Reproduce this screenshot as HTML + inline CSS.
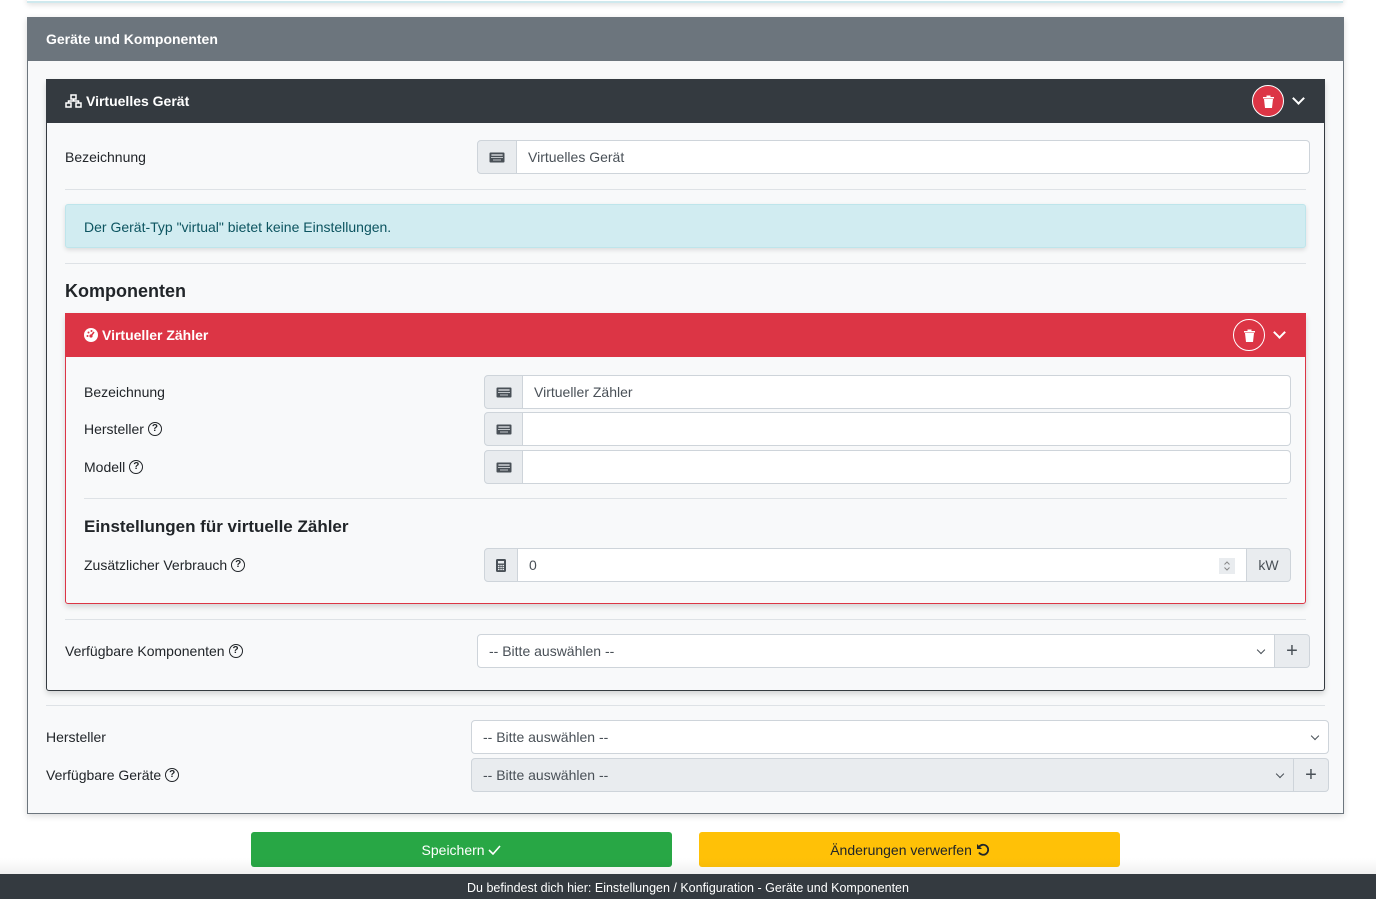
<!DOCTYPE html>
<html><head><meta charset="utf-8"><style>
*{box-sizing:border-box;margin:0;padding:0}
body{width:1376px;height:899px;background:#fff;font-family:"Liberation Sans",Arial,sans-serif;font-size:14px;color:#212529;position:relative;overflow:hidden}
.a{position:absolute}
.lbl{position:absolute;font-size:14px;color:#212529;display:flex;align-items:center}
.ig{position:absolute;display:flex;height:34px}
.ig .ad{background:#e9ecef;border:1px solid #ced4da;display:flex;align-items:center;justify-content:center;color:#495057}
.ig .in{flex:1;background:#fff;border:1px solid #ced4da;border-left:none;padding:0 11px;display:flex;align-items:center;color:#495057;font-size:14px}
.ig .l{border-radius:4px 0 0 4px}
.hr{position:absolute;height:1px;background:#dee2e6}
.q{display:inline-flex;align-items:center;justify-content:center;width:14px;height:14px;border:1.3px solid #212529;border-radius:50%;font-size:10px;font-weight:bold;margin-left:4px;line-height:1}
.chev{position:absolute;width:6px;height:6px;border-right:1.3px solid #495057;border-bottom:1.3px solid #495057;transform:rotate(45deg)}
.plus{font-size:20px;color:#343a40}
</style></head><body>
<div class="a" style="left:27px;top:-10px;width:1316px;height:13px;border-bottom:2px solid #cfe9ee;box-shadow:0 2px 6px rgba(0,0,0,.12)"></div>
<div class="a" style="left:27px;top:17px;width:1317px;height:797px;background:#f8f9fa;border:1px solid #6c757d;box-shadow:0 2px 6px rgba(0,0,0,.15)"></div>
<div class="a" style="left:27px;top:17px;width:1317px;height:44px;background:#6c757d;color:#fff;font-weight:bold;font-size:14px;padding:14px 19px">Geräte und Komponenten</div>
<div class="a" style="left:46px;top:79px;width:1279px;height:612px;border:1px solid #343a40;border-radius:3px;box-shadow:0 3px 6px rgba(0,0,0,.15)"></div>
<div class="a" style="left:46px;top:79px;width:1279px;height:44px;background:#343a40;color:#fff;font-weight:bold;padding:14px 19px;display:flex;align-items:center">
<svg width="17" height="14" viewBox="0 0 17 14" style="margin-right:4px"><g fill="none" stroke="#fff" stroke-width="1.5"><rect x="6" y="1" width="5" height="4"/><rect x="1" y="9" width="5" height="4"/><rect x="11" y="9" width="5" height="4"/><path d="M8.5 5v2M3.5 9V7h10v2"/></g></svg>Virtuelles Gerät</div>
<div class="a" style="left:1252px;top:85px;width:32px;height:32px;border-radius:50%;background:#dc3545;border:1.5px solid #fff;display:flex;align-items:center;justify-content:center"><svg width="11" height="13" viewBox="0 0 11 13"><path d="M0 2h11v1.5H0zM3.5 0.5h4v1.5h-4zM1 4h9l-1 9H2z" fill="#fff"/></svg></div>
<div class="a" style="left:1294px;top:94px;width:9px;height:9px;border-right:2px solid #fff;border-bottom:2px solid #fff;transform:rotate(45deg)"></div>

<div class="lbl" style="left:65px;top:149px">Bezeichnung</div>
<div class="ig" style="left:477px;top:140px;width:833px"><div class="ad l" style="width:40px"><svg width="16" height="11" viewBox="0 0 16 11"><rect x=".5" y=".5" width="15" height="10" rx="1" fill="#495057"/><path d="M2 3h12M2 5.5h12M4 8h8M4 2v2M6 2v2M8 2v2M10 2v2M12 2v2" stroke="#e9ecef" stroke-width=".8"/></svg></div><div class="in" style="border-radius:0 4px 4px 0">Virtuelles Gerät</div></div>
<div class="hr" style="left:65px;top:189px;width:1241px"></div>
<div class="a" style="left:65px;top:204px;width:1241px;height:44px;background:#d1ecf1;border:1px solid #bee5eb;border-radius:3px;color:#0c5460;padding:14px 18px;box-shadow:0 2px 5px rgba(0,0,0,.12)">Der Gerät-Typ "virtual" bietet keine Einstellungen.</div>
<div class="hr" style="left:65px;top:263px;width:1241px"></div>
<div class="a" style="left:65px;top:281px;font-size:18px;font-weight:bold">Komponenten</div>

<div class="a" style="left:65px;top:313px;width:1241px;height:291px;border:1px solid #dc3545;border-radius:3px;box-shadow:0 3px 6px rgba(0,0,0,.15)"></div>
<div class="a" style="left:65px;top:313px;width:1241px;height:44px;background:#dc3545;color:#fff;font-weight:bold;padding:14px 19px;display:flex;align-items:center">
<svg width="14" height="14" viewBox="0 0 14 14" style="margin-right:4px"><circle cx="7" cy="7" r="7" fill="#fff"/><circle cx="7" cy="8" r="1.6" fill="#dc3545"/><path d="M7 8l3-4" stroke="#dc3545" stroke-width="1.5"/><circle cx="3.5" cy="8" r="1" fill="#dc3545"/><circle cx="4.5" cy="4.5" r="1" fill="#dc3545"/><circle cx="7.5" cy="3" r="1" fill="#dc3545"/></svg>Virtueller Zähler</div>
<div class="a" style="left:1233px;top:319px;width:32px;height:32px;border-radius:50%;background:#dc3545;border:1.5px solid #fff;display:flex;align-items:center;justify-content:center"><svg width="11" height="13" viewBox="0 0 11 13"><path d="M0 2h11v1.5H0zM3.5 0.5h4v1.5h-4zM1 4h9l-1 9H2z" fill="#fff"/></svg></div>
<div class="a" style="left:1275px;top:328px;width:9px;height:9px;border-right:2px solid #fff;border-bottom:2px solid #fff;transform:rotate(45deg)"></div>

<div class="lbl" style="left:84px;top:384px">Bezeichnung</div>
<div class="lbl" style="left:84px;top:421px">Hersteller<span class="q">?</span></div>
<div class="lbl" style="left:84px;top:459px">Modell<span class="q">?</span></div>
<div class="ig" style="left:484px;top:375px;width:807px"><div class="ad l" style="width:39px"><svg width="16" height="11" viewBox="0 0 16 11"><rect x=".5" y=".5" width="15" height="10" rx="1" fill="#495057"/><path d="M2 3h12M2 5.5h12M4 8h8M4 2v2M6 2v2M8 2v2M10 2v2M12 2v2" stroke="#e9ecef" stroke-width=".8"/></svg></div><div class="in" style="border-radius:0 4px 4px 0">Virtueller Zähler</div></div>
<div class="ig" style="left:484px;top:412px;width:807px"><div class="ad l" style="width:39px"><svg width="16" height="11" viewBox="0 0 16 11"><rect x=".5" y=".5" width="15" height="10" rx="1" fill="#495057"/><path d="M2 3h12M2 5.5h12M4 8h8M4 2v2M6 2v2M8 2v2M10 2v2M12 2v2" stroke="#e9ecef" stroke-width=".8"/></svg></div><div class="in" style="border-radius:0 4px 4px 0"></div></div>
<div class="ig" style="left:484px;top:450px;width:807px"><div class="ad l" style="width:39px"><svg width="16" height="11" viewBox="0 0 16 11"><rect x=".5" y=".5" width="15" height="10" rx="1" fill="#495057"/><path d="M2 3h12M2 5.5h12M4 8h8M4 2v2M6 2v2M8 2v2M10 2v2M12 2v2" stroke="#e9ecef" stroke-width=".8"/></svg></div><div class="in" style="border-radius:0 4px 4px 0"></div></div>
<div class="hr" style="left:84px;top:498px;width:1203px"></div>
<div class="a" style="left:84px;top:517px;font-size:17px;font-weight:bold">Einstellungen für virtuelle Zähler</div>
<div class="lbl" style="left:84px;top:557px">Zusätzlicher Verbrauch<span class="q">?</span></div>
<div class="ig" style="left:484px;top:548px;width:807px"><div class="ad l" style="width:34px"><svg width="10" height="13" viewBox="0 0 10 13"><rect width="10" height="13" rx="1.5" fill="#495057"/><rect x="2" y="2" width="6" height="2.5" fill="#e9ecef"/><path d="M2 6.5h1.5M4.3 6.5h1.5M6.5 6.5h1.5M2 8.5h1.5M4.3 8.5h1.5M6.5 8.5h1.5M2 10.5h1.5M4.3 10.5h1.5M6.5 10.5h1.5" stroke="#e9ecef" stroke-width="1.2"/></svg></div><div class="in" style="position:relative">0<div class="a" style="right:11px;top:9px;width:16px;height:16px;background:#e9ecef"><svg width="16" height="16" viewBox="0 0 16 16"><path d="M5.5 6.5L8 4l2.5 2.5M5.5 9.5L8 12l2.5-2.5" fill="none" stroke="#888" stroke-width="1"/></svg></div></div><div class="ad" style="width:44px;border-left:none;border-radius:0 4px 4px 0">kW</div></div>

<div class="hr" style="left:65px;top:619px;width:1241px"></div>
<div class="lbl" style="left:65px;top:643px">Verfügbare Komponenten<span class="q">?</span></div>
<div class="ig" style="left:477px;top:634px;width:833px"><div class="in" style="border-left:1px solid #ced4da;border-radius:4px 0 0 4px;position:relative">-- Bitte auswählen --<div class="chev" style="right:10px;top:12px"></div></div><div class="ad plus" style="width:35px;border-left:none;border-radius:0 4px 4px 0">+</div></div>

<div class="hr" style="left:46px;top:705px;width:1279px"></div>
<div class="lbl" style="left:46px;top:729px">Hersteller</div>
<div class="ig" style="left:471px;top:720px;width:858px"><div class="in" style="border-left:1px solid #ced4da;border-radius:4px;position:relative">-- Bitte auswählen --<div class="chev" style="right:10px;top:12px"></div></div></div>
<div class="lbl" style="left:46px;top:767px">Verfügbare Geräte<span class="q">?</span></div>
<div class="ig" style="left:471px;top:758px;width:858px"><div class="in" style="border-left:1px solid #ced4da;border-radius:4px 0 0 4px;background:#e9ecef;position:relative">-- Bitte auswählen --<div class="chev" style="right:10px;top:12px"></div></div><div class="ad plus" style="width:35px;border-left:none;border-radius:0 4px 4px 0">+</div></div>

<div class="a" style="left:251px;top:832px;width:421px;height:35px;background:#28a745;border-radius:3px;color:#fff;display:flex;align-items:center;justify-content:center">Speichern&nbsp;<svg width="13" height="10" viewBox="0 0 13 10"><path d="M1 5l4 4 7-8" fill="none" stroke="#fff" stroke-width="1.6"/></svg></div>
<div class="a" style="left:699px;top:832px;width:421px;height:35px;background:#ffc107;border-radius:3px;color:#212529;display:flex;align-items:center;justify-content:center">Änderungen verwerfen&nbsp;<svg width="13" height="13" viewBox="0 0 13 13"><path d="M3 4a5 5 0 1 1 0 5.5" fill="none" stroke="#212529" stroke-width="1.8"/><path d="M1 1v5h5z" fill="#212529"/></svg></div>
<div class="a" style="left:0;top:858px;width:1376px;height:16px;background:linear-gradient(rgba(255,255,255,0),rgba(0,0,0,.06))"></div>
<div class="a" style="left:0;top:874px;width:1376px;height:25px;background:#343a40;color:#fff;font-size:12.5px;text-align:center;line-height:28px">Du befindest dich hier: Einstellungen / Konfiguration - Geräte und Komponenten</div>
</body></html>
